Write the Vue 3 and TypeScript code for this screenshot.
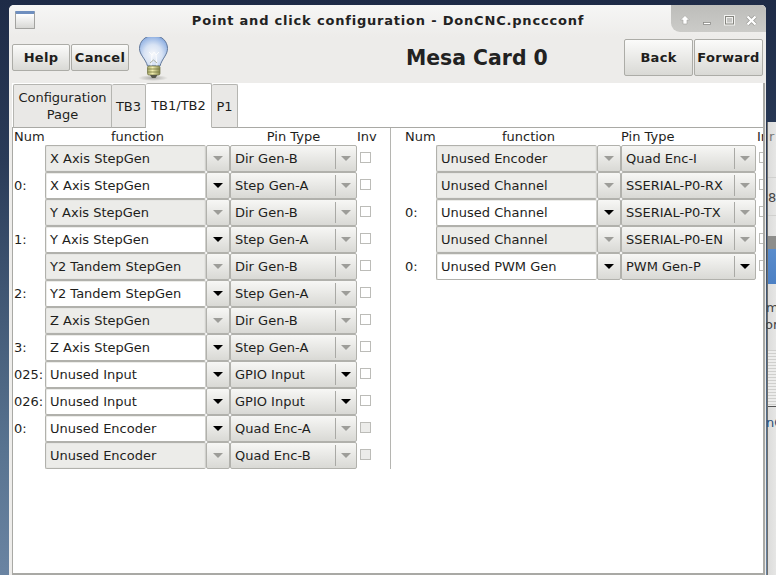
<script setup lang="ts">
interface PinRow {
  num: string;
  fn: string;
  fnOn: boolean;
  pin: string;
  pinOn: boolean;
  invOn: boolean;
}

const mk = (num: string, fn: string, fnOn: boolean, pin: string, pinOn = false, invOn = true): PinRow => ({
  num, fn, fnOn, pin, pinOn, invOn,
});

const leftRows: PinRow[] = [
  mk('', 'X Axis StepGen', false, 'Dir Gen-B'),
  mk('0:', 'X Axis StepGen', true, 'Step Gen-A'),
  mk('', 'Y Axis StepGen', false, 'Dir Gen-B'),
  mk('1:', 'Y Axis StepGen', true, 'Step Gen-A'),
  mk('', 'Y2 Tandem StepGen', false, 'Dir Gen-B'),
  mk('2:', 'Y2 Tandem StepGen', true, 'Step Gen-A'),
  mk('', 'Z Axis StepGen', false, 'Dir Gen-B'),
  mk('3:', 'Z Axis StepGen', true, 'Step Gen-A'),
  mk('025:', 'Unused Input', true, 'GPIO Input', true),
  mk('026:', 'Unused Input', true, 'GPIO Input', true),
  mk('0:', 'Unused Encoder', true, 'Quad Enc-A', false, false),
  mk('', 'Unused Encoder', false, 'Quad Enc-B', false, false),
];

const rightRows: PinRow[] = [
  mk('', 'Unused Encoder', false, 'Quad Enc-I'),
  mk('', 'Unused Channel', false, 'SSERIAL-P0-RX'),
  mk('0:', 'Unused Channel', true, 'SSERIAL-P0-TX'),
  mk('', 'Unused Channel', false, 'SSERIAL-P0-EN'),
  mk('0:', 'Unused PWM Gen', true, 'PWM Gen-P', true),
];

const panels = [
  { id: 'left', rows: leftRows },
  { id: 'right', rows: rightRows },
];

const tabs = [
  { label: 'Configuration Page', cls: 'tab-config' },
  { label: 'TB3', cls: 'tab-tb3' },
  { label: 'TB1/TB2', cls: 'active' },
  { label: 'P1', cls: 'tab-p1' },
];
</script>

<template>
  <div class="desktop">
    <div class="behind">
      <span class="b-text b1">r</span>
      <span class="b-text b2">8/</span>
      <div class="b-rule r1"></div>
      <div class="b-rule r2"></div>
      <div class="b-band"></div>
      <span class="b-text b3">m</span>
      <span class="b-text b4">or</span>
      <div class="b-lines"></div>
      <span class="b-text b5">nC</span>
    </div>

    <div class="window">
      <div class="titlebar">
        <div class="win-icon"></div>
        <div class="title">Point and click configuration - DonCNC.pnccconf</div>
        <div class="win-controls">
          <svg width="95" height="27" viewBox="0 0 95 27">
            <path d="M14 10.500 L18.500 15 H16 V19 H12 V15 H9.500 Z" fill="#fff" stroke="#a3a3a0" stroke-width="0.600" />
            <rect x="32.500" y="17.500" width="7" height="2" fill="#fff" stroke="#8a8a87" stroke-width="0.800" />
            <rect x="54.500" y="11.500" width="8" height="7.500" fill="none" stroke="#f2f2f0" stroke-width="3" />
            <rect x="54.500" y="11.500" width="8" height="7.500" fill="none" stroke="#85857f" stroke-width="1" />
            <path d="M76.500 11.500 L84.500 19.500 M84.500 11.500 L76.500 19.500" stroke="#9a9a96" stroke-width="3.800" />
            <path d="M76.500 11.500 L84.500 19.500 M84.500 11.500 L76.500 19.500" stroke="#fff" stroke-width="2.400" />
          </svg>
        </div>
      </div>

      <div class="toolbar">
        <div class="tool-left">
          <button class="btn small">Help</button>
          <button class="btn small">Cancel</button>
          <svg class="bulb" width="32" height="47" viewBox="0 0 32 47">
            <defs>
              <radialGradient id="glass" cx="0.480" cy="0.620" r="0.640">
                <stop offset="0" stop-color="#f6f8fb" />
                <stop offset="0.500" stop-color="#d8e3f4" />
                <stop offset="0.850" stop-color="#9dbae6" />
                <stop offset="1" stop-color="#7c9fd6" />
              </radialGradient>
              <linearGradient id="socket" x1="0" x2="1" y1="0" y2="0">
                <stop offset="0" stop-color="#a5a76a" />
                <stop offset="0.400" stop-color="#f3efb2" />
                <stop offset="1" stop-color="#85874f" />
              </linearGradient>
              <radialGradient id="shade">
                <stop offset="0" stop-color="#8c8c88" stop-opacity="0.700" />
                <stop offset="1" stop-color="#8c8c88" stop-opacity="0" />
              </radialGradient>
            </defs>
            <ellipse cx="15" cy="44" rx="15" ry="3" fill="url(#shade)" />
            <path d="M15.500 1.500 C24 1.500 29.500 7.500 29.500 14.500 C29.500 21 24 24.500 22 32 H9.500 C7.500 24.500 1.500 21 1.500 14.500 C1.500 7.500 7 1.500 15.500 1.500 Z" fill="url(#glass)" stroke="#62789a" stroke-width="1" />
            <path d="M11 18 L14 21 L16 18 L18 21 L21 18 M14 21 L13 32 M18 21 L19 32" fill="none" stroke="#ffffff" stroke-width="0.800" />
            <path d="M12 29 L15.500 26 L19 29" fill="none" stroke="#9a9f8c" stroke-width="0.800" />
            <rect x="9.500" y="32" width="12.500" height="9" rx="1.500" fill="url(#socket)" stroke="#6f7140" stroke-width="0.700" />
            <path d="M9.500 35 H22 M9.500 38 H22" stroke="#77793f" stroke-width="0.800" />
            <path d="M12 41 H19.500 L17.500 44 H14 Z" fill="#55564a" />
          </svg>
        </div>
        <div class="heading">Mesa Card 0</div>
        <div class="tool-right">
          <button class="btn big">Back</button>
          <button class="btn big">Forward</button>
        </div>
      </div>

      <div class="notebook">
        <div class="tabbar">
          <div v-for="t in tabs" :key="t.label" class="tab" :class="t.cls">{{ t.label }}</div>
        </div>
        <div class="page">
          <div v-for="p in panels" :key="p.id" class="panel" :class="p.id">
            <div class="row head">
              <span class="num">Num</span>
              <span class="h-fn">function</span>
              <span class="h-pin">Pin Type</span>
              <span class="h-inv">Inv</span>
            </div>
            <div v-for="(r, i) in p.rows" :key="i" class="row">
              <span class="num">{{ r.num }}</span>
              <div class="combo-entry">
                <span class="entry" :class="{ off: !r.fnOn }">{{ r.fn }}</span>
                <span class="arrow-btn"><i class="arrow" :class="{ dim: !r.fnOn }"></i></span>
              </div>
              <div class="combo-pin">
                <span class="pin-text">{{ r.pin }}</span>
                <span class="pin-sep"></span>
                <i class="arrow" :class="{ dim: !r.pinOn }"></i>
              </div>
              <span class="check" :class="{ off: !r.invOn }"></span>
            </div>
          </div>
        </div>
      </div>
    </div>
  </div>
</template>

<style>
html,
body {
  margin: 0;
  overflow: hidden;
}
</style>

<style scoped>
.desktop {
  position: relative;
  width: 776px;
  height: 575px;
  overflow: hidden;
  font-family: "DejaVu Sans", sans-serif;
  font-size: 13px;
  color: #1e1e1c;
  background: linear-gradient(180deg, #1e2b47 0%, #2a3b58 28%, #3f5572 50%, #587390 78%, #6a84a2 100%);
}

/* the other window peeking out on the right */
.behind {
  position: absolute;
  left: 767px;
  top: 122px;
  width: 30px;
  height: 453px;
  background: linear-gradient(90deg, #dcdcdb, #f3f3f2 60%);
  border-left: 1px solid #6f6f6d;
}

.b-text {
  position: absolute;
  left: 0;
  font-size: 13px;
  white-space: nowrap;
  color: #444;
}

.b1 { top: 7px; left: 1px; color: #777; }
.b2 { top: 68px; }
.b3 { top: 178px; left: -2px; }
.b4 { top: 195px; left: -3px; }
.b5 { top: 293px; left: -2px; color: #2b4f78; }

.b-rule {
  position: absolute;
  left: 0;
  right: 0;
  height: 1px;
  background: #d0d0ce;
}

.r1 { top: 55px; }
.r2 { top: 93px; }

.b-band {
  position: absolute;
  left: 0;
  right: 0;
  top: 114px;
  height: 48px;
  background: linear-gradient(180deg, #8d8d8b 0 13px, #5a8ccc 13px, #4c80c4 100%);
}

.b-lines {
  position: absolute;
  left: 0;
  right: 0;
  top: 228px;
  height: 56px;
  background: repeating-linear-gradient(180deg, #cfcfcd 0 1px, #ececeb 1px 3px);
  border-bottom: 1px solid #555;
}

.window {
  position: absolute;
  left: 9px;
  top: 5px;
  width: 757px;
  height: 570px;
  display: flex;
  flex-direction: column;
  background: #edecea;
  border-radius: 5px 5px 0 0;
  overflow: hidden;
}

.titlebar {
  position: relative;
  height: 32px;
  flex: none;
  display: flex;
  align-items: center;
  justify-content: center;
  background: linear-gradient(180deg, #f6f6f5, #edecea);
}

.title {
  font-weight: bold;
  font-size: 13px;
  letter-spacing: 0.800px;
  color: #222;
  padding-left: 1px;
  margin-top: -1px;
}

.win-icon {
  position: absolute;
  left: 6px;
  top: 6px;
  width: 18px;
  height: 14px;
  border: 1px solid #a3a3a0;
  border-top: 3px solid #6f8fbf;
  border-radius: 1px;
  background: linear-gradient(180deg, #ffffff, #d8d8d5);
}

.win-controls {
  position: absolute;
  right: 0;
  top: 0;
  width: 95px;
  height: 27px;
  background: linear-gradient(180deg, #bdbdba, #cbcbc8);
  border-radius: 0 0 0 9px;
  line-height: 0;
}

.toolbar {
  height: 41px;
  flex: none;
  display: flex;
  align-items: center;
  padding: 0 3px 5px;
}

.tool-left,
.tool-right {
  display: flex;
  align-items: center;
  gap: 1px;
}

.tool-left {
  width: 170px;
}

.tool-right {
  width: 139px;
  margin-left: auto;
}

.btn {
  box-sizing: border-box;
  font-family: inherit;
  font-weight: bold;
  font-size: 13px;
  letter-spacing: 0.300px;
  color: #1e1e1c;
  background: linear-gradient(180deg, #fbfbfa, #d9d9d5);
  border: 1px solid #acaca7;
  border-radius: 2px;
  padding: 0;
}

.btn.small {
  height: 27px;
  width: 58px;
}

.btn.big {
  height: 37px;
  width: 69px;
}

.bulb {
  margin-left: 8px;
}

.heading {
  font-weight: bold;
  font-size: 20.400px;
  color: #222;
  margin-left: 224px;
}

.notebook {
  flex: 1;
  display: flex;
  flex-direction: column;
  margin: 0 1px 0 3px;
  min-height: 0;
  background: #fff;
  border-right: 2px solid #a9a9a5;
}

.tabbar {
  height: 44px;
  flex: none;
  display: flex;
  align-items: flex-end;
  border-bottom: 1px solid #a9a9a5;
  padding-left: 1px;
}

.tab {
  box-sizing: border-box;
  height: 44px;
  display: flex;
  align-items: center;
  justify-content: center;
  text-align: center;
  line-height: 17px;
  background: #e9e8e6;
  border: 1px solid #b5b5b1;
  border-left: none;
  border-bottom: 1px solid #a9a9a5;
  border-radius: 2px 2px 0 0;
  margin-bottom: -1px;
}

.tab:first-child {
  border-left: 1px solid #b5b5b1;
}

.tab-config {
  width: 99px;
}

.tab-tb3 {
  width: 34px;
}

.tab-p1 {
  width: 26px;
}

.tab.active {
  width: 66px;
  height: 45px;
  background: #fff;
  border-bottom: 1px solid #fff;
}

.page {
  flex: 1;
  display: flex;
  min-height: 0;
  background: #fff;
  border-left: 1px solid #a9a9a5;
  border-bottom: 2px solid #a9a9a5;
  overflow: hidden;
}

.panel {
  flex: none;
}

.panel.left {
  width: 377px;
  height: 341px;
  border-right: 1px solid #b5b5b1;
}

.panel.right {
  padding-left: 13px;
  width: 360px;
}

.row {
  display: flex;
  align-items: center;
  height: 27px;
}

.row.head {
  height: 17px;
}

.num {
  box-sizing: border-box;
  width: 32px;
  flex: none;
  padding-left: 1px;
  white-space: nowrap;
}

.h-fn {
  width: 185px;
  text-align: center;
  flex: none;
}

.h-pin {
  width: 127px;
  text-align: center;
  flex: none;
}

.right .h-pin {
  width: 135px;
  text-align: left;
}

.h-inv {
  flex: none;
  width: 20px;
}

.right .h-inv {
  margin-left: 1px;
}

.combo-entry {
  display: flex;
  width: 185px;
  height: 27px;
  flex: none;
}

.entry {
  box-sizing: border-box;
  width: 161px;
  height: 27px;
  line-height: 25px;
  padding-left: 4px;
  background: #fff;
  border: 1px solid #b1b1ac;
  border-right: 1px solid #d0d0cc;
  border-radius: 2px;
  box-shadow: inset 1px 1px 0 #ecece9;
}

.entry.off {
  background: #ecece9;
  box-shadow: inset 0 0 0 1px #e6e6e3;
}

.arrow-btn {
  box-sizing: border-box;
  width: 24px;
  height: 27px;
  display: flex;
  align-items: center;
  justify-content: center;
  background: linear-gradient(180deg, #f7f7f5, #d9d9d5);
  border: 1px solid #b1b1ac;
  border-radius: 2px;
}

.arrow {
  display: block;
  width: 0;
  height: 0;
  border-left: 5px solid transparent;
  border-right: 5px solid transparent;
  border-top: 5px solid #000;
}

.arrow.dim {
  border-top-color: #9d9d99;
}

.combo-pin {
  box-sizing: border-box;
  width: 127px;
  height: 27px;
  flex: none;
  display: flex;
  align-items: center;
  background: linear-gradient(180deg, #f7f7f5, #d9d9d5);
  border: 1px solid #b1b1ac;
  border-radius: 2px;
  padding-left: 4px;
}

.right .combo-pin {
  width: 135px;
}

.pin-text {
  flex: 1;
  white-space: nowrap;
}

.pin-sep {
  width: 1px;
  height: 21px;
  background: #a9a9a5;
  margin-right: 5px;
}

.combo-pin .arrow {
  margin-right: 5px;
}

.check {
  box-sizing: border-box;
  width: 11px;
  height: 11px;
  margin: -2px 0 0 3px;
  flex: none;
  border: 1px solid #bcbcb8;
  background: #fff;
}

.check.off {
  background: #ececea;
}
</style>
